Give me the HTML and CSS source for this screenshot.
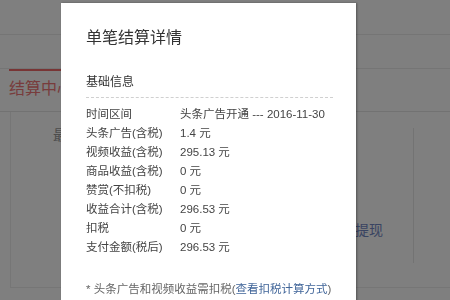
FILE: index.html
```html
<!DOCTYPE html>
<html lang="zh-CN">
  <head>
    <meta charset="UTF-8" />
    <meta name="viewport" content="width=device-width, initial-scale=1.0" />
    <title>单笔结算详情</title>
    <link rel="stylesheet" href="styles.css">
  </head>
  <body>
    <div class="page">
      <div class="topbar"></div>
      <div class="navbar"></div>
      <div class="tabs">
        <div class="tab active">结算中心</div>
      </div>
      <div class="card">
        <div class="card-title">最近结算</div>
        <div class="card-side">
          <a class="withdraw" href="#">去提现</a>
        </div>
      </div>
    </div>

    <div class="mask"></div>

    <div class="modal">
      <h2 class="modal-title">单笔结算详情</h2>
      <div class="section-title">基础信息</div>
      <table class="detail">
        <tr><td class="label">时间区间</td><td>头条广告开通 --- 2016-11-30</td></tr>
        <tr><td class="label">头条广告(含税)</td><td>1.4 元</td></tr>
        <tr><td class="label">视频收益(含税)</td><td>295.13 元</td></tr>
        <tr><td class="label">商品收益(含税)</td><td>0 元</td></tr>
        <tr><td class="label">赞赏(不扣税)</td><td>0 元</td></tr>
        <tr><td class="label">收益合计(含税)</td><td>296.53 元</td></tr>
        <tr><td class="label">扣税</td><td>0 元</td></tr>
        <tr><td class="label">支付金额(税后)</td><td>296.53 元</td></tr>
      </table>
      <div class="notes">
        <p>* 头条广告和视频收益需扣税(<a href="#">查看扣税计算方式</a>)</p>
        <p>* 赞赏所得金额无需缴税</p>
      </div>
    </div>
  </body>
</html>
```

FILE: styles.css
```css
html,
body {
  margin: 0;
  padding: 0;
  height: 100%;
  overflow: hidden;
}
body {
  font-family: "Liberation Sans", "Noto Sans CJK SC", sans-serif;
  background-color: #fff;
  color: #333;
}
.page {
  padding: 0 0 0 9px;
}
.topbar {
  height: 34px;
  margin-left: -9px;
  border-bottom: 1px solid #eaeaea;
}
.navbar {
  height: 33px;
  margin-left: -9px;
  border-bottom: 1px solid #eaeaea;
}
.tabs {
  height: 42px;
  margin-left: -9px;
  padding-left: 9px;
  border-bottom: 1px solid #e4e4e4;
}
.tab {
  display: inline-block;
  width: 110px;
  border-top: 2px solid #f06a6a;
  padding-top: 9px;
  font-size: 16px;
  line-height: 18px;
  color: #f07878;
}
.card {
  display: flex;
  height: 175px;
  margin-left: 1px;
  border-left: 1px solid #ececec;
  border-bottom: 1px solid #ececec;
}
.card-title {
  width: 360px;
  padding: 12px 0 0 42px;
  font-size: 14px;
  color: #999;
}
.card-side {
  margin-top: 16px;
  height: 135px;
  border-left: 1px solid #e6e6e6;
  width: 0;
}
.withdraw {
  display: block;
  width: 60px;
  margin: 91px 0 0 -91px;
  font-size: 14px;
  color: #7388c4;
  text-decoration: none;
  text-align: right;
}
.mask {
  position: fixed;
  top: 0;
  left: 0;
  right: 0;
  bottom: 0;
  background-color: rgba(0, 0, 0, 0.5);
}
.modal {
  position: absolute;
  top: 3px;
  left: 61px;
  width: 270px;
  height: 320px;
  padding: 25px 0 0 25px;
  background-color: #fff;
  box-shadow: 1px 0 2px rgba(0, 0, 0, 0.35);
}
.modal-title {
  margin: 0;
  font-size: 16px;
  font-weight: normal;
  line-height: 20px;
  color: #333;
}
.section-title {
  margin: 26px 0 0;
  padding-bottom: 7px;
  width: 247px;
  border-bottom: 1px dashed #d0d0d0;
  font-size: 12px;
  line-height: 16px;
  color: #333;
}
.detail {
  margin-top: 7px;
  border-collapse: collapse;
  font-size: 11.5px;
  color: #444;
}
.detail td {
  padding: 0;
  height: 19px;
  line-height: 19px;
  white-space: nowrap;
}
.detail .label {
  width: 94px;
}
.notes {
  margin-top: 23px;
  font-size: 11.5px;
  color: #666;
}
.notes p {
  margin: 0;
  line-height: 18px;
}
.notes a {
  color: #406599;
  text-decoration: none;
}
```
